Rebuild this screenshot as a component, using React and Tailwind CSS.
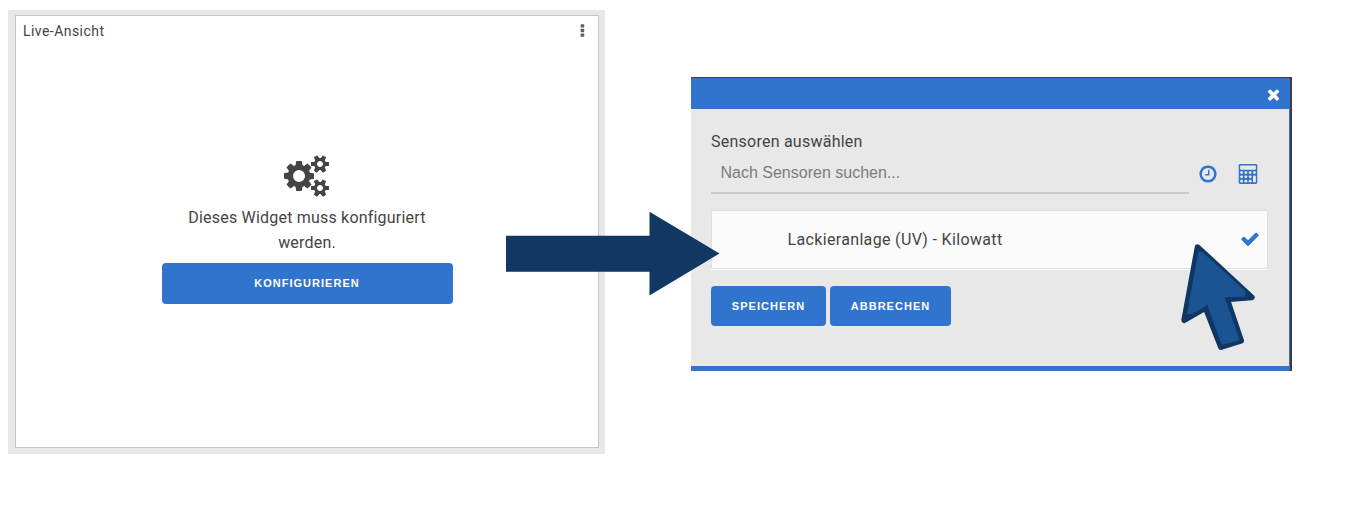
const COGS =
  'M832 896q0-106-75-181t-181-75-181 75-75 181 75 181 181 75 181-75 75-181zm768 512q0-52-38-90t-90-38-90 38-38 90q0 53 37.5 90.5t90.5 37.5 90.5-37.5 37.5-90.5zm0-1024q0-52-38-90t-90-38-90 38-38 90q0 53 37.5 90.5t90.5 37.5 90.5-37.5 37.5-90.5zm-384 421v185q0 10-7 19.5t-16 10.5l-155 24q-11 35-32 76 34 48 90 115 7 11 7 20 0 12-7 19-23 30-82.5 89.5t-78.5 59.5q-11 0-21-7l-115-90q-37 19-77 31-11 108-23 155-7 24-30 24h-186q-11 0-20-7.5t-10-17.5l-23-153q-34-10-75-31l-118 89q-7 7-20 7-11 0-21-8-144-133-144-160 0-9 7-19 10-14 41-53t47-61q-23-44-35-82l-152-24q-10-1-17-9.5t-7-19.5v-185q0-10 7-19.5t16-10.5l155-24q11-35 32-76-34-48-90-115-7-11-7-20 0-12 7-20 22-30 82-89t79-59q11 0 21 7l115 90q34-18 77-32 11-108 23-154 7-24 30-24h186q11 0 20 7.5t10 17.5l23 153q34 10 75 31l118-89q8-7 20-7 11 0 21 8 144 133 144 160 0 8-7 19-12 16-42 54t-45 60q23 48 34 82l152 23q10 2 17 10.5t7 19.5zm640 533v140q0 16-149 31-12 27-30 52 51 113 51 138 0 4-4 7-122 71-124 71-8 0-46-47t-52-68q-20 2-30 2t-30-2q-14 21-52 68t-46 47q-2 0-124-71-4-3-4-7 0-25 51-138-18-25-30-52-149-15-149-31v-140q0-16 149-31 13-29 30-52-51-113-51-138 0-4 4-7 4-2 35-20t59-34 30-16q8 0 46 46.5t52 67.5q20-2 30-2t30 2q51-71 92-112l6-2q4 0 124 70 4 3 4 7 0 25-51 138 17 23 30 52 149 15 149 31zm0-1024v140q0 16-149 31-12 27-30 52 51 113 51 138 0 4-4 7-122 71-124 71-8 0-46-47t-52-68q-20 2-30 2t-30-2q-14 21-52 68t-46 47q-2 0-124-71-4-3-4-7 0-25 51-138-18-25-30-52-149-15-149-31v-140q0-16 149-31 13-29 30-52-51-113-51-138 0-4 4-7 4-2 35-20t59-34 30-16q8 0 46 46.5t52 67.5q20-2 30-2t30 2q51-71 92-112l6-2q4 0 124 70 4 3 4 7 0 25-51 138 17 23 30 52 149 15 149 31z';
const TIMES =
  'M1490 1322q0 40-28 68l-136 136q-28 28-68 28t-68-28l-294-294-294 294q-28 28-68 28t-68-28l-136-136q-28-28-28-68t28-68l294-294-294-294q-28-28-28-68t28-68l136-136q28-28 68-28t68 28l294 294 294-294q28-28 68-28t68 28l136 136q28 28 28 68t-28 68l-294 294 294 294q28 28 28 68z';
const CHECK =
  'M1671 566q0 40-28 68l-724 724-136 136q-28 28-68 28t-68-28l-136-136-362-362q-28-28-28-68t28-68l136-136q28-28 68-28t68 28l294 295 656-657q28-28 68-28t68 28l136 136q28 28 28 68z';
const CLOCK =
  'M1024 544v448q0 14-9 23t-23 9h-320q-14 0-23-9t-9-23v-64q0-14 9-23t23-9h224v-352q0-14 9-23t23-9h64q14 0 23 9t9 23zm416 352q0-148-73-273t-198-198-273-73-273 73-198 198-73 273 73 273 198 198 273 73 273-73 198-198 73-273zm224 0q0 209-103 385.5t-279.5 279.5-385.5 103-385.5-103-279.5-279.5-103-385.5 103-385.5 279.5-279.5 385.5-103 385.5 103 279.5 279.5 103 385.5z';

function Icon({ d, viewBox = '0 0 1792 1792', className }) {
  return (
    <svg viewBox={viewBox} className={className} fill="currentColor" aria-hidden="true">
      <path d={d} />
    </svg>
  );
}

function CalculatorIcon({ className }) {
  const keys = [
    [320, 768], [704, 768], [1088, 768], [1472, 768],
    [320, 1152], [704, 1152], [1088, 1152],
    [320, 1536], [704, 1536], [1088, 1536],
  ];
  return (
    <svg viewBox="0 0 1792 1792" className={className} aria-hidden="true">
      <rect x="64" y="0" width="1664" height="1792" rx="128" fill="currentColor" />
      <g fill="#e8e8e8">
        <rect x="192" y="128" width="1408" height="384" rx="64" />
        {keys.map(([x, y]) => (
          <circle key={`${x}-${y}`} cx={x} cy={y} r="128" />
        ))}
        <rect x="1344" y="1024" width="256" height="640" rx="128" />
      </g>
    </svg>
  );
}

function Button({ className, children }) {
  return (
    <button
      className={`rounded-[4px] bg-[#3174cd] text-center font-['Liberation_Sans',Arial,sans-serif] text-[11px] font-bold text-white ${className}`}
    >
      {children}
    </button>
  );
}

function Widget() {
  return (
    <section className="h-[444px] w-[597px] shrink-0 bg-[#e8e8e8] pt-[5px] pl-[7px]">
      <div className="flex h-[433px] w-[584px] flex-col border border-[#c6c6c6] bg-white">
        <header className="flex h-[30px] justify-between pr-[8px] pl-[7px]">
          <h2 className="text-[14px] leading-[30px] tracking-[0.45px]">Live-Ansicht</h2>
          <svg viewBox="0 0 16 16" className="mt-[7px] h-4 w-4 text-[#606060]" fill="currentColor" aria-hidden="true">
            <rect x="6.6" y="1.2" width="3.6" height="3.4" rx="0.6" />
            <rect x="6.6" y="5.8" width="3.6" height="3.4" rx="0.6" />
            <rect x="6.6" y="10.4" width="3.6" height="3.4" rx="0.6" />
          </svg>
        </header>
        <div className="ml-[146px] flex w-[291px] flex-col items-center pt-[109px]">
          <Icon d={COGS} viewBox="-64 0 1920 1792" className="mr-[2px] h-[42px] w-[45px]" />
          <p className="mt-[8px] mr-[1px] w-[260px] text-center text-[16px] leading-[25px] tracking-[0.2px]">
            Dieses Widget muss konfiguriert werden.
          </p>
          <Button className="mt-[8px] h-[41px] w-[291px] pr-[1px] tracking-[1.02px]">KONFIGURIEREN</Button>
        </div>
      </div>
    </section>
  );
}

function SensorDialog() {
  return (
    <section className="mt-[67px] ml-[86px] h-[294px] w-[601px] shrink-0 bg-[#3b3d42] pt-px">
      <div className="flex h-[293px] w-[599px] flex-col rounded-tr-[3px] border-r border-b-[5px] border-[#3174cd] bg-[#e8e8e8]">
        <header className="flex h-[31px] shrink-0 items-center justify-end rounded-tr-[2px] bg-[#3174cd] pt-[1.5px] pr-[7px] text-white">
          <Icon d={TIMES} className="h-[17px] w-[17px]" />
        </header>
        <div className="pl-[20px]">
          <h2 className="mt-[21px] text-[16px] leading-[23px] tracking-[0.24px]">Sensoren auswählen</h2>
          <div className="flex h-[41px]">
            <div className="h-[41px] w-[478px] border-b-2 border-[#c9c9c9] pl-[9.5px] font-['Liberation_Sans',Arial,sans-serif] text-[16px] leading-[39px] text-[#7c7c7c]">
              Nach Sensoren suchen...
            </div>
            <Icon d={CLOCK} className="mt-[10.8px] ml-[9.4px] h-5 w-5 text-[#3174cd]" />
            <CalculatorIcon className="mt-[10.8px] ml-[19.4px] h-5 w-5 text-[#3174cd]" />
          </div>
          <div className="mt-[16px] flex h-[60px] w-[557px] flex-col border-b border-white">
            <div className="flex h-[59px] items-center justify-between border border-[#e0e0e0] bg-[#fbfbfb] pr-[7.3px] pl-[75.5px]">
              <span className="text-[16px] tracking-[0.34px]">Lackieranlage (UV) - Kilowatt</span>
              <Icon d={CHECK} className="mb-[1.5px] h-5 w-5 text-[#3174cd]" />
            </div>
          </div>
          <div className="mt-[16px] flex gap-[4px]">
            <Button className="h-[40px] w-[115px] tracking-[1.02px]">SPEICHERN</Button>
            <Button className="h-[40px] w-[121px] tracking-[1.02px]">ABBRECHEN</Button>
          </div>
        </div>
      </div>
    </section>
  );
}

export default function App() {
  return (
    <main className="relative flex h-[506px] w-[1346px] items-start overflow-hidden bg-white pt-[10px] pl-[8px] font-[Roboto,sans-serif] text-[#444444]">
      <Widget />
      <SensorDialog />
      <svg className="absolute top-[211px] left-[506px] h-[86px] w-[215px]" viewBox="506 211 215 86" aria-hidden="true">
        <path d="M506 235.8H649.5V211.7L719.5 253.5L649.5 295.5V271.8H506Z" fill="#123762" />
      </svg>
      <svg className="absolute top-[240px] left-[1177px] h-[114px] w-[82px]" viewBox="81 120 246 342" aria-hidden="true">
        <path
          d="M143 142L305 292L231 298L273 422L213 441L167 323L103 360Z"
          fill="#0f3763"
          stroke="#0f3763"
          strokeWidth="18"
          strokeLinejoin="round"
        />
        <path
          d="M145 155L156 155L288 275L284 290L224 292L268 418L262 423L215 434L172 315L125 343L111 341Z"
          fill="#1b5493"
        />
      </svg>
    </main>
  );
}
